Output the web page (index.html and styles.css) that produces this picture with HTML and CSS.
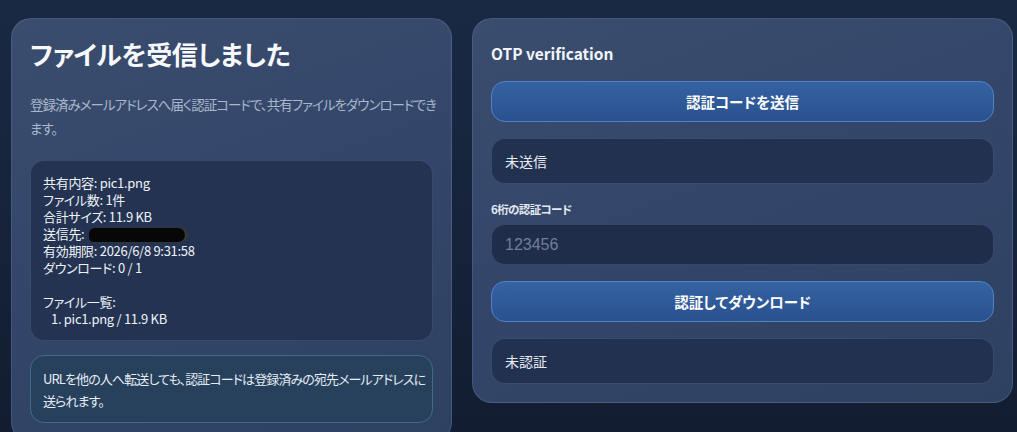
FILE: index.html
```html
<!DOCTYPE html>
<html lang="ja">
<head>
<meta charset="utf-8">
<title>ファイルを受信しました</title>
<link rel="stylesheet" href="styles.css">
</head>
<body>
<main class="layout">
  <section class="card card-info">
    <h1 class="title">ファイルを受信しました</h1>
    <p class="lead">登録済みメールアドレスへ届く認証コードで、共有ファイルをダウンロードできます。</p>
    <div class="details">
      <div>共有内容: pic1.png</div>
      <div>ファイル数: 1件</div>
      <div>合計サイズ: 11.9 KB</div>
      <div>送信先: <span class="redact"></span></div>
      <div>有効期限: 2026/6/8 9:31:58</div>
      <div>ダウンロード: 0 / 1</div>
      <div class="blank">&nbsp;</div>
      <div>ファイル一覧:</div>
      <div class="indent">1. pic1.png / 11.9 KB</div>
    </div>
    <div class="note">URLを他の人へ転送しても、認証コードは登録済みの宛先メールアドレスに送られます。</div>
  </section>

  <section class="card card-otp">
    <h2 class="otp-title">OTP verification</h2>
    <button class="btn" type="button">認証コードを送信</button>
    <div class="status">未送信</div>
    <div class="field">
      <label class="field-label" for="code">6桁の認証コード</label>
      <input class="field-input" id="code" type="text" placeholder="123456">
    </div>
    <button class="btn" type="button">認証してダウンロード</button>
    <div class="status">未認証</div>
  </section>
</main>
</body>
</html>
```

FILE: styles.css
```css
* { box-sizing: border-box; }

html, body {
  margin: 0;
  height: 100%;
}

body {
  background: linear-gradient(180deg, #1a2943 0%, #152238 60%, #131d31 100%);
  color: #eef2f8;
  font-family: "Noto Sans CJK JP", "Noto Sans", sans-serif;
  font-feature-settings: "palt";
  overflow: hidden;
}

.layout {
  display: grid;
  grid-template-columns: 441px 541px;
  gap: 20px;
  align-items: start;
  padding: 18px 0 0 11px;
}

.card {
  border: 1px solid rgba(140, 165, 210, 0.22);
  border-radius: 20px;
  background: linear-gradient(160deg, #3a4d6e 0%, #33466a 50%, #2f4161 100%);
  padding: 18px;
}

.title {
  margin: 0;
  font-size: 26px;
  line-height: 34px;
  font-weight: 700;
  color: #f7f9fc;
  letter-spacing: -0.3px;
}

.lead {
  margin: 21px -8px 0 0;
  font-size: 13.5px;
  line-height: 24px;
  letter-spacing: -1px;
  color: #a9b6cb;
}

.details {
  margin-top: 20px;
  padding: 13px 12px;
  border: 1px solid rgba(120, 145, 190, 0.25);
  border-radius: 14px;
  background: #243351;
  font-size: 13px;
  line-height: 17px;
  letter-spacing: -0.3px;
  color: #eef2f8;
}

.indent { padding-left: 8px; }

.redact {
  display: inline-block;
  width: 96px;
  height: 14px;
  margin-left: 2px;
  vertical-align: -3px;
  border-radius: 8px 10px 10px 6px;
  background: #070708;
  box-shadow: 2px 0 2px rgba(70, 70, 10, 0.8);
}

.note {
  margin-top: 14px;
  padding: 12px 2px 10px 12px;
  border: 1px solid #3b6d88;
  border-radius: 14px;
  background: #27405c;
  font-size: 13px;
  line-height: 22px;
  letter-spacing: -0.9px;
  color: #e4ebf4;
}

.card-otp {
  display: flex;
  flex-direction: column;
  gap: 16px;
}

.otp-title {
  margin: 4px 0 0;
  font-size: 15.5px;
  line-height: 24px;
  font-weight: 700;
  color: #f2f5fa;
}

.btn {
  height: 41px;
  border: 1px solid #5282c4;
  border-radius: 14px;
  background: linear-gradient(180deg, #3562a2 0%, #2a518f 100%);
  color: #ffffff;
  font-family: inherit;
  font-feature-settings: "palt";
  font-size: 14.5px;
  font-weight: 700;
  cursor: pointer;
}

.status {
  height: 46px;
  display: flex;
  align-items: center;
  padding: 0 13px;
  border: 1px solid rgba(110, 135, 180, 0.3);
  border-radius: 14px;
  background: #233150;
  font-size: 14px;
  color: #e6ebf3;
}

.field {
  display: flex;
  flex-direction: column;
  gap: 6px;
}

.field-label {
  font-size: 11.5px;
  line-height: 18px;
  font-weight: 700;
  letter-spacing: -0.6px;
  color: #e3e9f2;
}

.field-input {
  height: 41px;
  padding: 0 13px;
  border: 1px solid rgba(110, 135, 180, 0.3);
  border-radius: 14px;
  background: #1f2c4a;
  color: #eef2f8;
  font-family: "Liberation Sans", Arial, sans-serif;
  font-size: 16px;
  outline: none;
}

.field-input::placeholder {
  color: #6f7f9a;
}
```
